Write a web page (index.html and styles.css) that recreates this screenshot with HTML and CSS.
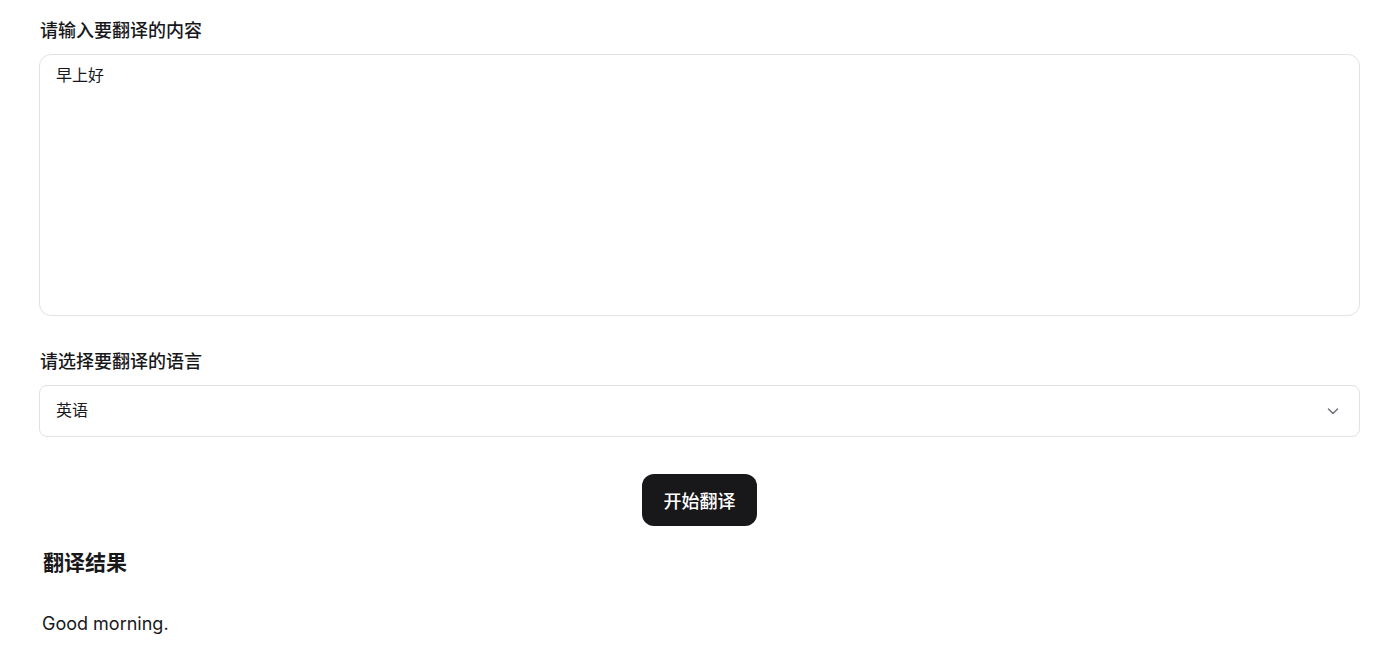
FILE: index.html
```html
<!DOCTYPE html>
<html lang="zh">
<head>
<meta charset="utf-8">
<link rel="stylesheet" href="styles.css">
</head>
<body>
<main class="page">
  <section class="field">
    <label class="label">请输入要翻译的内容</label>
    <div class="textarea">早上好</div>
  </section>
  <section class="field field-lang">
    <label class="label">请选择要翻译的语言</label>
    <div class="select">
      <span class="select-value">英语</span>
      <svg class="chevron" width="16" height="16" viewBox="0 0 16 16" fill="none" stroke="#71717a" stroke-width="1.5" stroke-linecap="round" stroke-linejoin="round"><path d="M3.5 6l4.5 4.5L12.5 6"/></svg>
    </div>
  </section>
  <div class="actions">
    <button class="btn">开始翻译</button>
  </div>
  <section class="result">
    <h2 class="result-title">翻译结果</h2>
    <p class="result-text">Good morning.</p>
  </section>
</main>
</body>
</html>
```

FILE: styles.css
```css
* { box-sizing: border-box; }
html, body { margin: 0; background: #ffffff; }
body {
  font-family: "Noto Sans CJK SC", "Inter", "Liberation Sans", sans-serif;
  color: #18181b;
}
.page {
  padding: 15px 40px 0 39px;
}
.field { display: flex; flex-direction: column; }
.field-lang { margin-top: 30px; }
.label {
  font-size: 18px;
  line-height: 28px;
  font-weight: 500;
  margin-bottom: 11px;
  margin-left: 1px;
}
.textarea {
  height: 262px;
  border: 1px solid #e2e2e5;
  border-radius: 12px;
  padding: 7px 16px;
  font-size: 16px;
  line-height: 24px;
}
.select {
  height: 52px;
  border: 1px solid #e2e2e5;
  border-radius: 8px;
  padding: 0 18px 0 16px;
  display: flex;
  align-items: center;
  justify-content: space-between;
  font-size: 16px;
}
.select-value { margin-top: -4px; }
.chevron { display: block; }
.actions {
  display: flex;
  justify-content: center;
  margin-top: 37px;
}
.btn {
  height: 52px;
  width: 115px;
  padding: 0;
  border: none;
  border-radius: 12px;
  background: #18181b;
  color: #ffffff;
  font-family: inherit;
  font-size: 18px;
  font-weight: 500;
}
.result { padding-left: 4px; margin-top: 20px; }
.result-title {
  font-size: 21px;
  line-height: 30px;
  font-weight: 700;
  margin: 0;
}
.result-text {
  margin: 34px 0 0 -1px;
  font-family: "Inter", "Liberation Sans", sans-serif;
  font-size: 18px;
  line-height: 28px;
}
```
